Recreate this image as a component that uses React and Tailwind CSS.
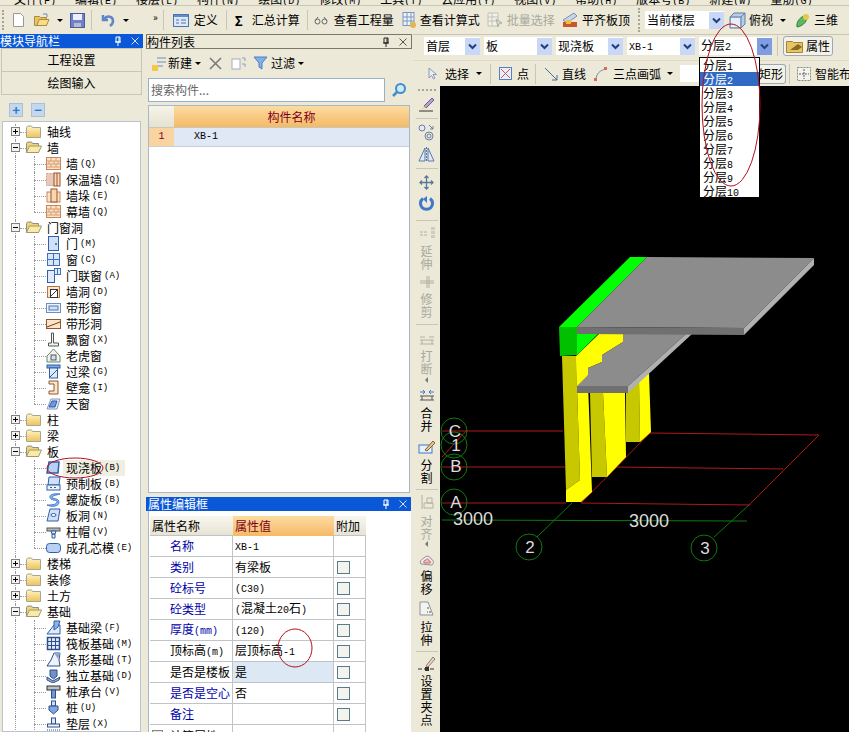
const CJK = "font-['Noto_Sans_CJK_SC',sans-serif]";

// 半角字符用等宽小字, 近似宋体的宽度
function Mixed({ text }) {
  const parts = text.split(/([\x20-\x7e]+)/).filter(Boolean);
  return parts.map((p, i) =>
    /^[\x20-\x7e]+$/.test(p)
      ? <span key={i} className="font-['Liberation_Mono',monospace] text-[10px]">{p}</span>
      : <span key={i}>{p}</span>
  );
}

function Caret({ className = '' }) {
  return <span className={`inline-block w-0 h-0 border-x-[3px] border-x-transparent border-t-[3px] border-t-black ${className}`} />;
}

function Grip() {
  return <span className="w-[2px] h-[20px] border-l-2 border-dotted border-[#a8a594] shrink-0" />;
}

function Sep({ h = 'h-[20px]', className = '' }) {
  return <span className={`w-px ${h} bg-[#c9c6b4] shrink-0 ${className}`} />;
}

function ComboArrow({ dark = false, className = '' }) {
  return (
    <span className={`w-[15px] h-[17px] flex items-center justify-center shrink-0 ${dark ? 'bg-[#7f9de0]' : 'bg-[#c9d8f6]'} ${className}`}>
      <svg width="9" height="7" viewBox="0 0 9 7"><path d="M1 1.5 4.5 5 8 1.5" fill="none" stroke="#21407f" strokeWidth="2" /></svg>
    </span>
  );
}

function Combo({ label, w, dark }) {
  return (
    <div className={`h-[18px] bg-white flex items-center justify-between shrink-0 pl-[2px] ${w}`}>
      <span className="text-[12px] leading-none whitespace-nowrap"><Mixed text={label} /></span>
      <ComboArrow dark={dark} />
    </div>
  );
}

function PinClose({ dark }) {
  const c = dark ? '#222' : '#fff';
  return (
    <div className="flex items-center gap-[9px] pr-[4px] shrink-0">
      <svg width="8" height="10" viewBox="0 0 8 10"><path d="M1 6h6M2 1h4v5H2zM4 6v4M5 1v5" fill="none" stroke={c} strokeWidth="1" /></svg>
      <svg width="8" height="8" viewBox="0 0 8 8"><path d="M0.5 0.5 7.5 7.5M7.5 0.5 0.5 7.5" stroke={dark ? '#555' : '#cfe0ff'} strokeWidth="1" /></svg>
    </div>
  );
}

/* ---------- 工具栏图标 ---------- */
const TB = {
  file: <svg width="11" height="14" viewBox="0 0 11 14"><path d="M.5.5h7l3 3v10H.5z" fill="#fff" stroke="#9a9a8c" /></svg>,
  open: <svg width="16" height="14" viewBox="0 0 16 14"><path d="M.5 3.5h5l1 1h6v8H.5z" fill="#e6c46a" stroke="#b08a32" /><path d="M3 12.5 5 6.5h10l-2.5 6z" fill="#f6dc8c" stroke="#b08a32" /><path d="M9 1h4v3" fill="none" stroke="#6f8fc0" /></svg>,
  save: <svg width="15" height="15" viewBox="0 0 15 15"><rect x=".5" y=".5" width="14" height="14" fill="#6d83c8" stroke="#4a5c9c" /><rect x="3" y="1" width="9" height="6" fill="#eef" /><rect x="4" y="10" width="7" height="4" fill="#b8bcc8" /></svg>,
  undo: <svg width="15" height="14" viewBox="0 0 15 14"><path d="M2 2v5h5M3 6.5C6 2 12 3 12 8c0 2-1 3.5-3 5" fill="none" stroke="#5f86c8" strokeWidth="2.5" /></svg>,
  def: <svg width="16" height="13" viewBox="0 0 16 13"><rect x=".5" y=".5" width="15" height="12" fill="#dfe8f6" stroke="#4c74b4" /><rect x="1" y="1" width="14" height="2" fill="#5f8ccc" /><path d="M3 6h3M3 9h3M8 6h5M8 9h5" stroke="#4c74b4" /></svg>,
  glasses: <svg width="14" height="9" viewBox="0 0 14 9"><circle cx="3.5" cy="5.5" r="2.5" fill="none" stroke="#666" /><circle cx="10.5" cy="5.5" r="2.5" fill="none" stroke="#666" /><path d="M1 5 4 1M13 5 10 1" stroke="#666" /></svg>,
  calc: <svg width="17" height="17" viewBox="0 0 17 17"><rect x="3" y=".5" width="11" height="13" fill="#eef2fa" stroke="#7d95bd" /><path d="M3 5h11M3 9h11M7 1v12M11 1v12" stroke="#7d95bd" /><circle cx="13" cy="13" r="3" fill="#e2b64e" /></svg>,
  batch: <svg width="17" height="17" viewBox="0 0 17 17"><path d="M1 1h10v13H1zM1 5h10M1 9h10M5 1v13" fill="#f2f1e8" stroke="#c0c0b8" /><path d="M9 7l6 4-3 1-1 3z" fill="#d4d4cc" stroke="#b0b0a8" /></svg>,
  level: <svg width="16" height="16" viewBox="0 0 16 16"><path d="M1 8 12 1l3 3L5 11z" fill="#c8d4ea" stroke="#7d8fb0" /><rect x="1" y="10" width="14" height="5" fill="#c9572e" /><rect x="4" y="8" width="5" height="4" fill="#eec13c" /></svg>,
  cube: <svg width="17" height="17" viewBox="0 0 17 17"><path d="M1 5 5 1h11v11l-4 4H1z" fill="#b8cde8" stroke="#5f7f9f" /><path d="M1 5h11v11M12 5l4-4" fill="none" stroke="#5f7f9f" /><rect x="2" y="6" width="9" height="9" fill="#e8eff8" /></svg>,
  three: <svg width="16" height="17" viewBox="0 0 16 17"><path d="M2 15C1 9 6 4 12 3c1 5-3 11-10 12z" fill="#5fb85f" stroke="#2f7f3f" /><circle cx="11" cy="5" r="3" fill="#e6c84a" /></svg>,
  prop: <svg width="18" height="14" viewBox="0 0 18 14"><path d="M.5 2.5h6l1 1h9v10H.5z" fill="#e6c46a" stroke="#a8842e" /><path d="M4 11 12 5l4 3-4 3z" fill="#8a6a20" /></svg>,
  cursor: <svg width="9" height="13" viewBox="0 0 9 13"><path d="M1 1v10l2.5-2.5L5.5 12l1.5-1L5 7.5h3.5z" fill="#e8edf6" stroke="#8a9ab8" /></svg>,
  point: <svg width="13" height="13" viewBox="0 0 13 13"><rect x=".5" y=".5" width="12" height="12" fill="#e8eefa" stroke="#5a7ec0" /><path d="M2 2l9 9M11 2l-9 9" stroke="#d0574a" /></svg>,
  line: <svg width="14" height="14" viewBox="0 0 14 14"><path d="M1 1 13 13M13 8v5H8" fill="none" stroke="#4a6a9a" strokeWidth="1" /></svg>,
  arc: <svg width="13" height="14" viewBox="0 0 13 14"><path d="M2 13C2 7 6 3 12 2" fill="none" stroke="#7a8aa0" /><rect x="0" y="11" width="3" height="3" fill="#d86a5a" /><rect x="10" y="0" width="3" height="3" fill="#d86a5a" /></svg>,
  smart: <svg width="14" height="14" viewBox="0 0 14 14"><rect x=".5" y=".5" width="13" height="13" fill="#f4f4ec" stroke="#888" strokeDasharray="2 1" /><path d="M7 2v10M2 7h10" stroke="#556" strokeDasharray="2 1" /></svg>,
};

function ToolText({ children, className = '' }) {
  return <span className={`text-[12px] leading-none whitespace-nowrap ${className}`}>{children}</span>;
}

/* ---------- 树节点图标 ---------- */
function Folder({ open }) {
  return open ? (
    <svg width="16" height="13" viewBox="0 0 16 13"><path d="M.5 2.5 1.5 1h4l1 1.5h6v9H.5z" fill="#f0d27a" stroke="#8f8f80" /><path d="M.5 11.5 3.5 5h12l-3 6.5z" fill="#fbe9a6" stroke="#a09a70" /></svg>
  ) : (
    <svg width="15" height="13" viewBox="0 0 15 13"><path d="M.5 2.5 1.5 1h4l1 1.5h8V12.5H.5z" fill="url(#fold)" stroke="#a8a68e" /><defs><linearGradient id="fold" x1="0" y1="0" x2="0" y2="1"><stop offset="0" stopColor="#fff3c4" /><stop offset="1" stopColor="#ecc45a" /></linearGradient></defs></svg>
  );
}

const brick = <><rect x=".5" y="1.5" width="14" height="12" fill="#fbe4c8" stroke="#c9865a" /><path d="M1 5h13M1 8h13M1 11h13M5 2v3M10 2v3M3 5v3M8 5v3M12 5v3M5 8v3M10 8v3" stroke="#d89a6e" /></>;
const ICONS = {
  brick,
  insul: <><rect x=".5" y="1.5" width="8" height="12" fill="#e8c8b8" stroke="#d0a090" strokeDasharray="2 1" /><rect x="8" y="1" width="6" height="13" fill="#f4dcc0" stroke="#a0502a" /><path d="M11 1v13" stroke="#a0502a" /></>,
  pier: <><rect x="1" y="4" width="13" height="10" fill="#fbe4c8" stroke="#c9865a" /><rect x="5" y="1" width="6" height="13" fill="#f6d8b0" stroke="#a0502a" /></>,
  door: <><rect x="2.5" y=".5" width="10" height="14" fill="#cfe0f8" stroke="#2f5fa8" /><circle cx="10" cy="8" r="1" fill="#2f5fa8" /></>,
  win: <><rect x="1.5" y="1.5" width="12" height="12" fill="#d8e6fa" stroke="#3f6fb8" /><path d="M7.5 2v11M2 7.5h11" stroke="#3f6fb8" /></>,
  doorwin: <><rect x="1.5" y="2.5" width="7" height="12" fill="#dfeafa" stroke="#2f5fa8" /><rect x="8.5" y=".5" width="6" height="6" fill="#dfeafa" stroke="#3f6fb8" /><path d="M11.5 1v5" stroke="#3f6fb8" /></>,
  hole: <><rect x="1.5" y="2.5" width="12" height="11" fill="#fbe4c8" stroke="#b0764a" /><rect x="4.5" y="5.5" width="7" height="8" fill="#fff" stroke="#333" /><path d="M4 13 12 5" stroke="#333" /></>,
  band: <><rect x=".5" y="3.5" width="14" height="9" fill="#eef3fb" stroke="#6f8fc0" /><rect x="3" y="6" width="9" height="4" fill="#cfe0f8" stroke="#4f78b8" /></>,
  bandh: <><rect x=".5" y="3.5" width="14" height="9" fill="#fbe4c8" stroke="#8f5a30" /><path d="M1 11 14 6" stroke="#6f3f1a" /></>,
  bay: <path d="M5.5 1v10h-3v3h10v-3h-5V1z" fill="#f4f4ec" stroke="#555" />,
  dormer: <><path d="M7.5 1 14 8v6H1V8z" fill="#f4f4ec" stroke="#5a8a6a" /><rect x="5" y="7" width="5" height="5" fill="#cfe0f8" stroke="#555" /></>,
  lintel: <><rect x="1" y="1" width="13" height="3" fill="#7fa8e0" stroke="#2f5fa8" /><rect x="3.5" y="4" width="8" height="10" fill="#dfeafa" stroke="#2f5fa8" /><path d="M4 13 11 6" stroke="#2f5fa8" /></>,
  niche: <path d="M3 1h9v13H3v-3h5V4H3z" fill="#fbe4c8" stroke="#8f5a30" />,
  sky: <><path d="M1 13 5 3h9l-3 10z" fill="#dfeafa" stroke="#8a9ab8" /><path d="M3 11 6 5h5l-2 6z" fill="#6f98d8" stroke="#2f5fa8" /></>,
  slab: <path d="M3 2h10l-1 11H1z" fill="#b8d0f4" stroke="#2f5fa8" strokeWidth="1.5" />,
  preslab: <><path d="M3 1h11l-1 8H2z" fill="#cfe0f8" stroke="#2f5fa8" /><rect x="1" y="9" width="13" height="5" fill="#eef3fb" stroke="#2f5fa8" /><path d="M4 11h2v1H4zM8 11h2v1H8z" fill="#2f5fa8" /></>,
  spiral: <path d="M14 2C5 1 2 4 5 7c3 2 7 1 6 3-1 3-6 3-10 3 4 2 12 2 12-3 0-4-7-3-7-5 0-1 4-2 8-3z" fill="#8fb8f0" stroke="#3f78d0" />,
  slabh: <><path d="M4 1h10l-2 12H1z" fill="#cfe0f8" stroke="#2f5fa8" /><ellipse cx="7.5" cy="7" rx="2.5" ry="1.5" fill="#fff" stroke="#2f5fa8" /></>,
  cap: <><rect x="1" y="4" width="13" height="3" fill="#b8b8b8" stroke="#555" /><path d="M5 7h5l-1 3H6zM6 10h3v4H6z" fill="#dfeafa" stroke="#2f5fa8" /></>,
  core: <rect x=".5" y="3.5" width="14" height="9" rx="3" fill="#b8d0f4" stroke="#2f5fa8" />,
  fbeam: <><path d="M1 14 8 5h6v9z" fill="#dfeafa" stroke="#2f5fa8" /><path d="M8 1h6l-2 6-4 3z" fill="#8fb0e0" stroke="#2f5fa8" /></>,
  raft: <><rect x="1.5" y="1.5" width="12" height="12" fill="#dfeafa" stroke="#2f4f88" strokeWidth="1.5" /><path d="M5.5 2v11M9.5 2v11M2 5.5h11M2 9.5h11" stroke="#2f4f88" /></>,
  strip: <><path d="M1 14 5 8l3-7h6l-1 7 1 6z" fill="#eef3fb" stroke="#2f4f88" /><path d="M8 1h6l-2 6z" fill="#8fa8d0" /></>,
  indep: <><path d="M1 9 7 13l7-4-1 3-6 3-6-3z" fill="#8fb0e0" stroke="#2f4f88" /><path d="M4 2h7v6L7.5 11 4 8z" fill="#6f90c8" stroke="#2f4f88" /></>,
  pilecap: <><rect x="1" y="2" width="13" height="4" fill="#b8c0cc" stroke="#333" /><rect x="5.5" y="6" width="4" height="8" fill="#6f98d8" stroke="#2f4f88" /></>,
  pile: <><rect x="5.5" y="1" width="4" height="5" fill="#cfe0f8" stroke="#2f4f88" /><path d="M3 6h9v4l-4.5 4L3 10z" fill="#7fa8e0" stroke="#2f4f88" /></>,
  bed: <><rect x="5.5" y="2" width="4" height="6" fill="#dfeafa" stroke="#2f4f88" /><rect x="1.5" y="8" width="12" height="3" fill="#eef3fb" stroke="#2f4f88" /><path d="M1 14h13" stroke="#2f4f88" strokeDasharray="1 1" /></>,
};

const TREE = [
  ['f', '轴线'],
  ['o', '墙'],
  ['c', '墙 (Q)', 'brick'], ['c', '保温墙 (Q)', 'insul'], ['c', '墙垛 (E)', 'pier'], ['l', '幕墙 (Q)', 'brick'],
  ['o', '门窗洞'],
  ['c', '门 (M)', 'door'], ['c', '窗 (C)', 'win'], ['c', '门联窗 (A)', 'doorwin'], ['c', '墙洞 (D)', 'hole'],
  ['c', '带形窗', 'band'], ['c', '带形洞', 'bandh'], ['c', '飘窗 (X)', 'bay'], ['c', '老虎窗', 'dormer'],
  ['c', '过梁 (G)', 'lintel'], ['c', '壁龛 (I)', 'niche'], ['l', '天窗', 'sky'],
  ['f', '柱'], ['f', '梁'],
  ['o', '板'],
  ['c', '现浇板 (B)', 'slab', true], ['c', '预制板 (B)', 'preslab'], ['c', '螺旋板 (B)', 'spiral'], ['c', '板洞 (N)', 'slabh'],
  ['c', '柱帽 (V)', 'cap'], ['l', '成孔芯模 (E)', 'core'],
  ['f', '楼梯'], ['f', '装修'], ['f', '土方'],
  ['o', '基础'],
  ['c', '基础梁 (F)', 'fbeam'], ['c', '筏板基础 (M)', 'raft'], ['c', '条形基础 (T)', 'strip'], ['c', '独立基础 (D)', 'indep'],
  ['c', '桩承台 (V)', 'pilecap'], ['c', '桩 (U)', 'pile'], ['c', '垫层 (X)', 'bed'],
];

function Expander({ open }) {
  return (
    <span className="absolute left-[8px] top-[3px] w-[9px] h-[9px] border border-[#808080] bg-[#f4f4ee] flex items-center justify-center">
      <span className="relative w-[5px] h-px bg-black">
        {!open && <span className="absolute left-[2px] -top-[2px] w-px h-[5px] bg-black" />}
      </span>
    </span>
  );
}

function TreeRow({ row }) {
  const [kind, label, icon, active] = row;
  const isChild = kind === 'c' || kind === 'l';
  const [name, key] = label.split(' ');
  return (
    <div className="relative h-4 flex items-center">
      <span className="absolute left-[12px] top-0 bottom-0 border-l border-dotted border-[#9a9a9a]" />
      {isChild ? (
        <>
          <span className={`absolute left-[31px] top-0 border-l border-dotted border-[#9a9a9a] ${kind === 'l' ? 'h-2' : 'h-4'}`} />
          <span className="absolute left-[31px] top-2 w-[12px] border-t border-dotted border-[#9a9a9a]" />
          <svg className="absolute left-[43px] top-0" width="15" height="15" viewBox="0 0 15 15">{ICONS[icon]}</svg>
          <span className={`ml-[60px] pl-[3px] h-4 flex items-center text-[12px] leading-none whitespace-nowrap ${active ? 'bg-[#f0eee0] w-[62px]' : ''}`}>
            {name}
            {key && <span className="ml-[2px] font-['Liberation_Mono',monospace] text-[9px]">{key}</span>}
          </span>
        </>
      ) : (
        <>
          <Expander open={kind === 'o'} />
          <span className="absolute left-[17px] top-2 w-[6px] border-t border-dotted border-[#9a9a9a]" />
          <span className="absolute left-[23px] top-[1px]"><Folder open={kind === 'o'} /></span>
          <span className="ml-[44px] text-[12px] leading-none whitespace-nowrap">{label}</span>
        </>
      )}
    </div>
  );
}

function LeftPanel() {
  return (
    <aside className="w-[143px] shrink-0 flex flex-col bg-[#ece9d8]">
      <div className="h-[14px] bg-[#0a58d8] text-white text-[12px] leading-[14px] flex items-center justify-between">
        <span>模块导航栏</span>
        <PinClose />
      </div>
      <button className="h-[24px] mx-[1px] border border-[#c9c6b4] bg-[#ece9d8] text-[12px]">工程设置</button>
      <button className="h-[23px] mx-[1px] border-x border-b border-[#c9c6b4] bg-[#ece9d8] text-[12px]">绘图输入</button>
      <div className="h-[26px] flex items-center gap-[8px] pl-[9px] pt-[3px]">
        <span className="w-[14px] h-[14px] bg-[#c4d7ec] border border-[#a8c0da] flex items-center justify-center text-[#2f78c8] font-bold text-[13px] leading-none">+</span>
        <span className="w-[14px] h-[14px] bg-[#c4d7ec] border border-[#a8c0da] flex items-center justify-center text-[#2f78c8] font-bold text-[13px] leading-none">−</span>
      </div>
      <div className="flex-1 min-h-0 overflow-hidden mx-[2px] bg-white border border-[#b8c4d0] pt-[2px]">
        {TREE.map((row, i) => <TreeRow key={i} row={row} />)}
      </div>
    </aside>
  );
}

const PROPS = [
  ['名称', 'XB-1', true, false],
  ['类别', '有梁板', true, true],
  ['砼标号', '(C30)', true, true],
  ['砼类型', '(混凝土20石)', true, true],
  ['厚度(mm)', '(120)', true, true],
  ['顶标高(m)', '层顶标高-1', false, true],
  ['是否是楼板', '是', false, true, true],
  ['是否是空心', '否', true, true],
  ['备注', '', true, true],
];

function MiddlePanel() {
  return (
    <section className="w-[266px] ml-[3px] shrink-0 flex flex-col bg-[#ece9d8]">
      <div className="h-[15px] border border-[#7a7868] bg-[#ece9d8] text-[12px] leading-[13px] flex items-center justify-between">
        <span>构件列表</span>
        <PinClose dark />
      </div>
      <div className="h-[28px] flex items-center pl-[5px] text-[12px]">
        <svg width="16" height="16" viewBox="0 0 16 16"><path d="M6 3h9M6 7h9M6 11h6" stroke="#6f8fc0" /><rect x="1" y="10" width="6" height="6" fill="#f2c84a" /></svg>
        <span className="ml-[1px]">新建</span>
        <Caret className="ml-[3px]" />
        <svg className="ml-[8px]" width="13" height="13" viewBox="0 0 13 13"><path d="M1 1 12 12M12 1 1 12" stroke="#777" strokeWidth="1.5" /></svg>
        <svg className="ml-[9px]" width="16" height="14" viewBox="0 0 16 14"><rect x="1" y="3" width="8" height="10" fill="#fff" stroke="#aab" /><path d="M11 2h3v3M11 8h3v3" fill="none" stroke="#8aa0c8" /></svg>
        <svg className="ml-[6px]" width="15" height="14" viewBox="0 0 15 14"><path d="M1 1h13L9 7v6L6 11V7z" fill="#7fb0e8" stroke="#4f80c0" /></svg>
        <span className="ml-[3px]">过滤</span>
        <Caret className="ml-[3px]" />
      </div>
      <div className="h-[25px] flex items-center pl-[2px] gap-[3px]">
        <div className="w-[237px] h-[24px] bg-white border border-[#9ab0c8] text-[#666] text-[12px] leading-[22px] pl-[2px]">搜索构件...</div>
        <svg width="16" height="16" viewBox="0 0 16 16" className="ml-[3px]"><circle cx="9.5" cy="6.5" r="4.5" fill="#cfe8fa" stroke="#3f8fd0" strokeWidth="2" /><path d="M6 10 2 14" stroke="#3f8fd0" strokeWidth="2.5" /></svg>
      </div>
      <div className="h-[388px] mx-[2px] mt-[3px] bg-white border border-[#a8b8c8] flex flex-col">
        <div className="flex h-[22px] border-b border-[#c8c8b8]">
          <div className="w-[25px] bg-gradient-to-b from-[#f6f4ea] to-[#e6e2d0]" />
          <div className="flex-1 bg-gradient-to-b from-[#fcdba0] to-[#f4ba66] text-[#800020] text-[12px] leading-[21px] text-center">构件名称</div>
        </div>
        <div className="flex h-[19px] border-b border-[#c8d0da]">
          <div className="w-[25px] bg-[#f9d3a0] text-[#800020] font-['Liberation_Mono',monospace] text-[10px] leading-[18px] text-center">1</div>
          <div className="flex-1 bg-[#dfe8f4] font-['Liberation_Mono',monospace] text-[10px] leading-[18px] pl-[20px]">XB-1</div>
        </div>
      </div>
      <div className="h-[4px]" />
      <div className="h-[14px] bg-[#0a58d8] text-white text-[12px] leading-[14px] flex items-center justify-between mr-[1px]">
        <span className="pl-[2px]">属性编辑框</span>
        <PinClose />
      </div>
      <div className="flex-1 min-h-0 overflow-hidden bg-white ml-[2px] mr-[1px] pl-[1px] pt-[5px] border-l border-[#a8b8c8]">
        <div className="w-[216px] grid grid-cols-[83px_101px_32px] text-[12px] leading-none">
          <div className="h-[20px] bg-gradient-to-b from-[#f8f6ee] to-[#e8e4d4] flex items-center pl-[2px] border-b border-[#c0c4c8]">属性名称</div>
          <div className="h-[20px] bg-gradient-to-b from-[#fcdba0] to-[#f4ba66] text-[#800020] flex items-center pl-[2px]">属性值</div>
          <div className="h-[20px] bg-gradient-to-b from-[#f8f6ee] to-[#e8e4d4] flex items-center pl-[2px] border-b border-[#c0c4c8]">附加</div>
          {PROPS.map(([name, value, blue, check, hi]) => (
            <div key={name} className="contents">
              <div className={`h-[21px] pl-[20px] flex items-center whitespace-nowrap border-b border-r border-[#c0c4c8] ${blue ? 'text-[#0000aa]' : 'text-black'}`}><span><Mixed text={name} /></span></div>
              <div className={`h-[21px] pl-[2px] flex items-center whitespace-pre border-b border-r border-[#c0c4c8] ${hi ? 'bg-[#dde8f5]' : ''}`}><span><Mixed text={value} /></span></div>
              <div className="h-[21px] flex items-center pl-[3px] border-b border-r border-[#c0c4c8]">
                {check && <span className="w-[13px] h-[13px] border border-[#5a7a8a] bg-[#f4f4ee]" />}
              </div>
            </div>
          ))}
          <div className="h-[21px] flex items-center pl-[2px] border-r border-[#c0c4c8]">
            <span className="w-[11px] h-[11px] border border-[#888] bg-[#e8e4d4] flex items-center justify-center text-[10px]">+</span>
            <span className="ml-[7px]">计算属性</span>
          </div>
          <div className="h-[21px] border-r border-[#c0c4c8]" />
          <div className="h-[21px] border-r border-[#c0c4c8]" />
        </div>
      </div>
    </section>
  );
}

function VTool({ icon, chars, gray, caret, className = '', textClass = 'mt-[5px]', caretClass = 'mt-[2px]' }) {
  return (
    <div className={`flex flex-col items-center shrink-0 ${gray ? 'text-[#a8a89c]' : 'text-black'} ${className}`}>
      {icon}
      <span className={`flex flex-col items-center text-[12px] leading-[13px] ${textClass}`}>
        {chars.split('').map((c, i) => <span key={i}>{c}</span>)}
      </span>
      {caret && <span className={`w-0 h-0 border-y-[3px] border-y-transparent border-r-[3px] border-r-[#777] ${caretClass}`} />}
    </div>
  );
}

function VSep({ className = '' }) {
  return <span className={`w-[22px] h-px bg-[#c9c6b4] shrink-0 ${className}`} />;
}

function VerticalToolbar() {
  return (
    <div className="w-[27px] shrink-0 bg-[#ece9d8] flex flex-col items-center overflow-hidden">
      <span className="mt-[3px] w-[18px] border-t-2 border-dotted border-[#a8a594]" />
      <svg className="mt-[6px] shrink-0" width="17" height="15" viewBox="0 0 17 15"><path d="M6 9 14 1l2 2-8 8z" fill="#b8a0d8" stroke="#6a5a8a" /><path d="M1 14h14" stroke="#333" /><path d="M3 13l3-4 2 2z" fill="#e8d8a0" /></svg>
      <VSep className="mt-[6px]" />
      <svg className="mt-[5px] shrink-0" width="17" height="17" viewBox="0 0 17 17"><circle cx="4" cy="4" r="3" fill="#dfeafa" stroke="#6a7fa0" /><circle cx="11" cy="12" r="4" fill="none" stroke="#6a7fa0" /><circle cx="11" cy="12" r="2" fill="none" stroke="#6a7fa0" /><path d="M11 1l4 4M15 2v3h-3" fill="none" stroke="#6a7fa0" /></svg>
      <svg className="mt-[5px] shrink-0" width="17" height="17" viewBox="0 0 17 17"><path d="M7 2v13H1zM10 2v13h6z" fill="#dfeafa" stroke="#5a78a8" /><path d="M8.5 1v15" stroke="#5a78a8" strokeDasharray="2 1" /></svg>
      <VSep className="mt-[5px]" />
      <svg className="mt-[6px] shrink-0" width="15" height="15" viewBox="0 0 15 15"><path d="M7.5 1v13M1 7.5h13M5.5 3l2-2 2 2M5.5 12l2 2 2-2M3 5.5l-2 2 2 2M12 5.5l2 2-2 2" fill="none" stroke="#5a7898" strokeWidth="1.3" /></svg>
      <svg className="mt-[6px] shrink-0" width="15" height="15" viewBox="0 0 15 15"><path d="M4 2.5A6 6 0 1 0 11 2.5" fill="none" stroke="#3f78c8" strokeWidth="3" /><path d="M8 0v7L4 3z" fill="#3f78c8" /></svg>
      <VSep className="mt-[9px]" />
      <VTool gray chars="延伸" className="mt-[6px]" textClass="mt-[5px]" icon={<svg width="16" height="12" viewBox="0 0 16 12"><path d="M1 5h8M1 8h8M13 0v12M15 0v12" stroke="#b0b0a4" strokeDasharray="3 1" /></svg>} />
      <VTool gray chars="修剪" className="mt-[6px]" textClass="mt-[4px]" icon={<svg width="16" height="12" viewBox="0 0 16 12"><path d="M1 5h14M1 7h14M8 0v12M10 0v12" stroke="#b0b0a4" /></svg>} />
      <VSep className="mt-[6px]" />
      <VTool gray chars="打断" caret className="mt-[9px]" textClass="mt-[4px]" icon={<svg width="16" height="11" viewBox="0 0 16 11"><path d="M1 3h5M10 3h5M1 6h14M1 10h14M3 6v4M13 6v4" stroke="#b0b0a4" /></svg>} />
      <VTool chars="合并" className="mt-[7px]" textClass="mt-[5px]" icon={<svg width="16" height="11" viewBox="0 0 16 11"><path d="M1 2h5M10 2h5M4 0l2 2-2 2M12 0l-2 2 2 2" fill="none" stroke="#3f78c8" /><path d="M1 6h14M1 10h14M3 6v4M13 6v4" stroke="#555" /></svg>} />
      <VTool chars="分割" className="mt-[8px]" textClass="mt-[4px]" icon={<svg width="17" height="14" viewBox="0 0 17 14"><rect x="1" y="5" width="13" height="8" fill="#e8f0fa" stroke="#3f78c8" /><path d="M7 10 15 1l2 2-8 8z" fill="#e8c888" stroke="#8a5a30" /></svg>} />
      <VSep className="mt-[5px]" />
      <VTool gray chars="对齐" caret caretClass="mt-[1px]" className="mt-[5px]" textClass="mt-[5px]" icon={<svg width="14" height="14" viewBox="0 0 14 14"><path d="M2 0v14M4 8h9v5H4zM7 3h5v5H7z" fill="none" stroke="#b0b0a4" /></svg>} />
      <VTool chars="偏移" className="mt-[7px]" textClass="mt-[2px]" icon={<svg width="15" height="13" viewBox="0 0 15 13"><path d="M2 10C0 7 3 5 5 4c2-3 6-2 7 1 3 1 3 4 1 6z" fill="#f8e8e0" stroke="#8a90a8" /><path d="M5 9c-1-2 1-3 2-3 1-2 3-1 3 1 2 0 2 2 1 2z" fill="#f4b8b8" stroke="#c07070" /></svg>} />
      <VTool chars="拉伸" className="mt-[6px]" textClass="mt-[4px]" icon={<svg width="15" height="15" viewBox="0 0 15 15"><path d="M1 1h8l5 13H1z" fill="#f4f4ec" stroke="#8a90a8" /><path d="M9 6v2M11 10v2M8 11h1" stroke="#555" /></svg>} />
      <VSep className="mt-[5px]" />
      <VTool chars="设置夹点" className="mt-[4px]" textClass="mt-[3px]" icon={<svg width="18" height="15" viewBox="0 0 18 15"><path d="M8 10 15 1l2 2-7 8z" fill="#e8d8c8" stroke="#8a7a6a" /><path d="M0 13h18" stroke="#333" strokeDasharray="4 2" /><rect x="7" y="11" width="4" height="4" fill="#333" /></svg>} />
    </div>
  );
}

function Scene() {
  return (
    <svg className="flex-1 min-w-0 h-full block bg-black" viewBox="440 86 409 646" width="409" height="646">
      {/* 轴网 */}
      <g stroke="#b01818" strokeWidth="1" fill="none">
        <path d="M442 431H563M650 433 819 435M442 467H565M614 467 783 469M442 503H566M581 503 750 505" />
        <path d="M442 457 467 430M819 435 749 505M581 503 650 433" />
      </g>
      <g stroke="#0f7a0f" strokeWidth="1" fill="none">
        <path d="M442 520 747 521M572 503 537 537M749 505 714 537" />
        <circle cx="454" cy="431" r="13" /><circle cx="454" cy="445" r="13" /><circle cx="454" cy="467" r="13" /><circle cx="454" cy="502" r="13" />
        <circle cx="529" cy="547" r="13" /><circle cx="704" cy="548" r="13" />
      </g>
      {/* 柱 */}
      <polygon points="562,356 576,356 580,480 566,490" fill="#c8c800" />
      <polygon points="576,356 587,356 592,492 581,502 566,502 566,490 580,480" fill="#ffff00" />
      <polygon points="590,393 603,393 607,477 592,477" fill="#c8c800" />
      <polygon points="603,393 625,393 626,457 607,477" fill="#ffff00" />
      <polygon points="626,393 639,380 640,442 626,442" fill="#c8c800" />
      <polygon points="639,380 649,373 651,432 640,442" fill="#ffff00" />
      <polygon points="576,356 599,334 623,334 623,342 602,355 602,362 588,368 588,375 577,385" fill="#ffff00" />
      {/* 下层板 */}
      <polygon points="588,368 602,362 602,355 623,342 623,334 686,334 628,386 577,386 588,375" fill="#8c8c8c" />
      <polygon points="686,334 628,386 628,393 692,334" fill="#b0b0b0" />
      <polygon points="577,386 628,386 628,393 577,393" fill="#707070" />
      {/* 上层板 */}
      <polygon points="559,327 630,257 647,257 577,327" fill="#00ff00" />
      <polygon points="559,327 577,327 577,355 560,356" fill="#00c000" />
      <polygon points="577,334 598,334 577,355" fill="#00ff00" />
      <polygon points="647,257 814,258 744,328 577,327" fill="#8c8c8c" />
      <polygon points="744,335 814,265 814,258 744,328" fill="#b0b0b0" />
      <polygon points="577,327 744,328 744,335 577,334" fill="#707070" />
      {/* 标注 */}
      <g fill="#dcdcdc" fontFamily="'Liberation Sans',sans-serif" fontSize="17" textAnchor="middle">
        <text x="455" y="437">C</text>
        <text x="456" y="451">1</text>
        <text x="456" y="472">B</text>
        <text x="456" y="508">A</text>
        <text x="530" y="553">2</text>
        <text x="705" y="554">3</text>
        <text x="473" y="525" fontSize="18">3000</text>
        <text x="649" y="527" fontSize="18">3000</text>
      </g>
    </svg>
  );
}

export default function App() {
  return (
    <div className={`relative w-[849px] h-[732px] overflow-hidden bg-[#ece9d8] text-black ${CJK}`}>
      {/* 被裁切的菜单栏 */}
      <div className="h-[6px] overflow-hidden bg-[#ece9d8] border-b border-[#c9c6b4] flex gap-[19px] pl-[14px] text-[12px] leading-none">
        {['文件(F)', '编辑(E)', '楼层(L)', '构件(N)', '绘图(D)', '修改(M)', '工具(T)', '云应用(Y)', '视图(V)', '帮助(H)', '版本号(B)', '新建(W)', '量筋(G)'].map((m) => (
          <span key={m} className="-mt-[7px] whitespace-nowrap"><Mixed text={m} /></span>
        ))}
      </div>

      {/* 主工具栏 */}
      <div className="h-[28px] flex items-center bg-[#ece9d8] pl-[2px]">
        <Grip />
        <span className="ml-[9px] flex">{TB.file}</span>
        <span className="ml-[10px] flex">{TB.open}</span>
        <Caret className="ml-[7px]" />
        <span className="ml-[7px] flex">{TB.save}</span>
        <Sep className="ml-[6px]" />
        <span className="ml-[9px] flex">{TB.undo}</span>
        <Caret className="ml-[7px]" />
        <span className="ml-[24px] text-[10px] leading-none mb-[6px]">»</span>
        <Sep className="ml-[5px]" />
        <span className="ml-[9px] flex">{TB.def}</span>
        <ToolText className="ml-[5px]">定义</ToolText>
        <Sep className="ml-[8px]" />
        <span className="ml-[8px] text-[13px] font-bold leading-none w-[9px]">Σ</span>
        <ToolText className="ml-[8px]">汇总计算</ToolText>
        <Sep className="ml-[7px]" />
        <span className="ml-[6px] flex">{TB.glasses}</span>
        <ToolText className="ml-[6px]">查看工程量</ToolText>
        <span className="ml-[6px] flex">{TB.calc}</span>
        <ToolText className="ml-[3px]">查看计算式</ToolText>
        <span className="ml-[7px] flex">{TB.batch}</span>
        <ToolText className="ml-[3px] text-[#a8a89c]">批量选择</ToolText>
        <span className="ml-[7px] flex">{TB.level}</span>
        <ToolText className="ml-[4px]">平齐板顶</ToolText>
        <span className="ml-[8px]"><Grip /></span>
        <span className="ml-[5px]"><Combo label="当前楼层" w="w-[79px]" /></span>
        <span className="ml-[5px] flex">{TB.cube}</span>
        <ToolText className="ml-[3px]">俯视</ToolText>
        <Caret className="ml-[7px]" />
        <span className="ml-[9px] flex">{TB.three}</span>
        <ToolText className="ml-[3px]">三维</ToolText>
      </div>

      {/* 主体 */}
      <div className="h-[698px] flex">
        <LeftPanel />
        <MiddlePanel />
        <div className="ml-[1px] flex-1 min-w-0 flex flex-col border-t border-[#c9c6b4]">
          <div className="h-[25px] flex items-center bg-[#ece9d8] pl-[11px] pb-[3px] gap-[4px]">
            <Combo label="首层" w="w-[56px]" />
            <Combo label="板" w="w-[68px]" />
            <Combo label="现浇板" w="w-[67px]" />
            <Combo label="XB-1" w="w-[68px]" />
            <Combo label="分层2" w="w-[73px]" dark />
            <Sep className="ml-[1px]" />
            <button className="ml-[1px] h-[20px] w-[50px] border border-[#9aa8b8] rounded-[3px] flex items-center justify-center gap-[2px] text-[12px] bg-[#f4f2e6]">
              {TB.prop}<span>属性</span>
            </button>
          </div>
          <div className="h-[26px] flex items-center bg-[#ece9d8] border-t border-[#dedbc8] pl-[15px] text-[12px] overflow-hidden [&>*]:shrink-0">
            {TB.cursor}
            <ToolText className="ml-[8px]">选择</ToolText>
            <Caret className="ml-[7px]" />
            <Sep className="ml-[8px]" />
            <span className="ml-[8px] flex">{TB.point}</span>
            <ToolText className="ml-[5px]">点</ToolText>
            <Sep className="ml-[6px]" />
            <span className="ml-[8px] flex">{TB.line}</span>
            <ToolText className="ml-[4px]">直线</ToolText>
            <span className="ml-[8px] flex">{TB.arc}</span>
            <ToolText className="ml-[6px]">三点画弧</ToolText>
            <Caret className="ml-[6px]" />
            <span className="ml-[7px] w-[21px] h-[17px] bg-white" />
            <span className="w-[85px] h-[20px] flex items-center justify-end pr-[2px] border border-[#9aa8b8] rounded-[3px] bg-[#f4f2e6] border-l-0">矩形</span>
            <Sep className="ml-[3px]" />
            <span className="ml-[7px] flex">{TB.smart}</span>
            <ToolText className="ml-[4px]">智能布置</ToolText>
          </div>
          <div className="flex-1 min-h-0 flex">
            <VerticalToolbar />
            <Scene />
          </div>
        </div>
      </div>

      {/* 分层下拉列表 */}
      <ul className="absolute left-[699px] top-[57px] w-[61px] h-[141px] bg-white border border-black text-[12px] leading-[14px]">
        {[1, 2, 3, 4, 5, 6, 7, 8, 9, 10].map((n) => (
          <li key={n} className={`h-[14px] pl-[3px] whitespace-nowrap ${n === 2 ? 'bg-[#316ac5] text-white' : ''}`}>
            <Mixed text={`分层${n}`} />
          </li>
        ))}
      </ul>

      {/* 红色手绘圈 */}
      <svg className="absolute left-0 top-0 pointer-events-none" width="849" height="732" viewBox="0 0 849 732" fill="none" stroke="#b01020" strokeWidth="1">
        <ellipse cx="731" cy="105" rx="29" ry="81" />
        <ellipse cx="75" cy="468" rx="28" ry="10" />
        <ellipse cx="295" cy="648" rx="17" ry="19" />
      </svg>
    </div>
  );
}
